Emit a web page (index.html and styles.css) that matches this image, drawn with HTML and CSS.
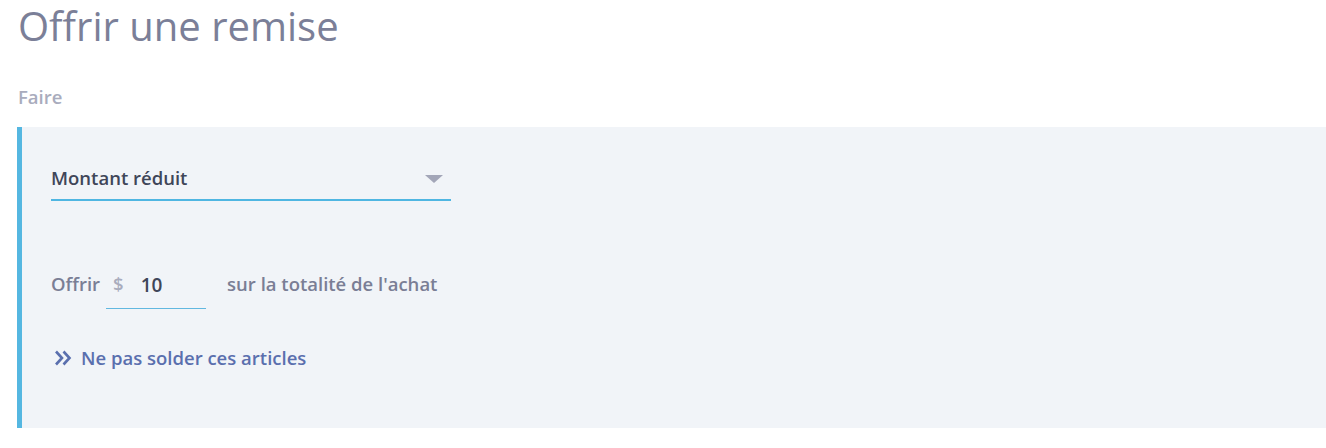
FILE: index.html
```html
<!DOCTYPE html>
<html lang="fr">
<head>
<meta charset="utf-8">
<link rel="stylesheet" href="styles.css">
</head>
<body>
<div class="page">
  <h1 class="title">Offrir une remise</h1>
  <div class="label">Faire</div>
  <div class="panel">
    <div class="select">
      <span class="select-text">Montant réduit</span>
      <span class="caret"></span>
    </div>
    <div class="offer">
      <span class="muted">Offrir</span>
      <div class="amount">
        <span class="currency">$</span>
        <span class="value">10</span>
      </div>
      <span class="muted">sur la totalité de l'achat</span>
    </div>
    <a class="link" href="#">
      <svg class="chev" width="18" height="16" viewBox="0 0 18 16"><path d="M2 1.5l6 6.5-6 6.5M9.5 1.5l6 6.5-6 6.5" fill="none" stroke="#5a6fae" stroke-width="2.6" stroke-linecap="butt" stroke-linejoin="miter"/></svg>
      <span>Ne pas solder ces articles</span>
    </a>
  </div>
</div>
</body>
</html>
```
FILE: styles.css
```css
* { box-sizing: border-box; }
html, body { margin: 0; padding: 0; background: #fff; }
body { font-family: "Open Sans", "Noto Sans", sans-serif; }
.page { padding: 0 0 0 17px; }
.title {
  margin: 0;
  padding: 0 0 0 1px;
  font-size: 40px;
  font-weight: 400;
  line-height: 52px;
  color: #7b7f98;
}
.label {
  margin-top: 33px;
  padding-left: 1px;
  font-size: 18.5px;
  font-weight: 600;
  line-height: 24px;
  color: #a9acbd;
}
.panel {
  margin-top: 18px;
  height: 301px;
  background: #f1f4f8;
  border-left: 5px solid #55b7e1;
  padding: 38px 0 0 29px;
}
.select {
  width: 400px;
  height: 36px;
  border-bottom: 2px solid #4fb6e2;
  display: flex;
  align-items: flex-start;
  justify-content: space-between;
  padding-right: 8px;
}
.select-text {
  margin-top: 1px;
  font-size: 18.5px;
  font-weight: 600;
  line-height: 24px;
  color: #3f4659;
}
.caret {
  width: 0; height: 0;
  border-left: 9.5px solid transparent;
  border-right: 9.5px solid transparent;
  border-top: 8px solid #a3a6b8;
  margin-top: 10px;
}
.offer {
  margin-top: 70px;
  display: flex;
  align-items: flex-start;
  height: 38px;
}
.muted {
  font-size: 18.5px;
  font-weight: 600;
  color: #7a7e95;
  line-height: 26px;
}
.amount {
  margin-left: 6px;
  width: 100px;
  height: 38px;
  border-bottom: 1px solid #62b8e0;
  display: flex;
  align-items: flex-start;
  padding-left: 7px;
  margin-right: 21px;
}
.currency {
  font-size: 18.5px;
  font-weight: 600;
  color: #a9acbd;
  line-height: 26px;
}
.value {
  margin-left: 17px;
  font-size: 19px;
  font-weight: 600;
  color: #3f4659;
  line-height: 26px;
  margin-top: 1px;
}
.link {
  margin-top: 36px;
  margin-left: 3px;
  display: flex;
  align-items: center;
  gap: 9px;
  text-decoration: none;
  font-size: 18.5px;
  font-weight: 600;
  color: #5a6fae;
}
.chev { display: block; }
```
